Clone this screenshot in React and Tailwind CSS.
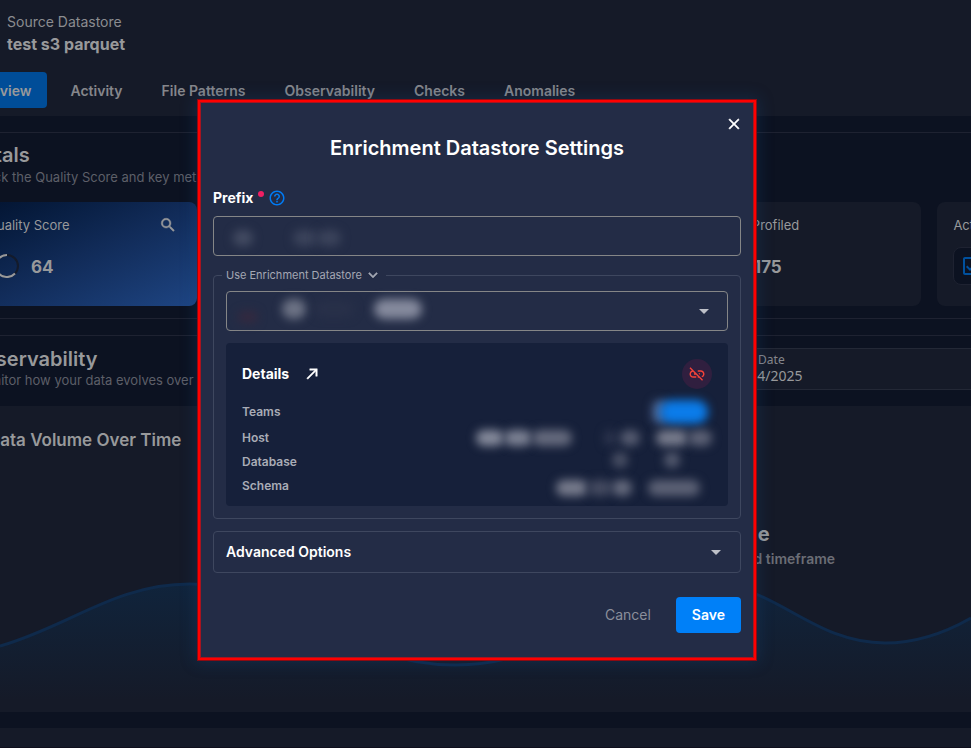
import React from "react";
import { MdArrowDropDown, MdHelpOutline, MdLinkOff, MdOutlineCheckBox } from "react-icons/md";

const tabs = ["Overview", "Activity", "File Patterns", "Observability", "Checks", "Anomalies"];

const glyphs = {
  close: "M19 6.41 17.59 5 12 10.59 6.41 5 5 6.41 10.59 12 5 17.59 6.41 19 12 13.41 17.59 19 19 17.59 13.41 12Z",
  search:
    "M9.5 3A6.5 6.5 0 0 1 16 9.5C16 11.11 15.41 12.59 14.44 13.73L14.71 14H15.5L20.5 19 19 20.5 14 15.5V14.71L13.73 14.44C12.59 15.41 11.11 16 9.5 16A6.5 6.5 0 0 1 9.5 3M9.5 5C7 5 5 7 5 9.5S7 14 9.5 14 14 12 14 9.5 12 5 9.5 5Z",
  chevron: "M7.41 8.58 12 13.17 16.59 8.58 18 10 12 16 6 10Z",
  arrow: "M5 17.59 15.59 7H9V5h10v10h-2V8.41L6.41 19Z",
};

function Glyph({ name, className }) {
  return (
    <svg aria-hidden="true" viewBox="0 0 24 24" fill="currentColor" stroke="currentColor" strokeWidth="0.6" className={className}>
      <path d={glyphs[name]} />
    </svg>
  );
}

function Header() {
  return (
    <header className="bg-[#151a28] pb-2 pt-3">
      <div className="pl-[7px]">
        <p className="text-sm leading-5 text-[#8b8c90]">Source Datastore</p>
        <h1 className="text-base font-bold leading-6 text-[#98999b]">test s3 parquet</h1>
      </div>
      <nav className="-ml-[49px] mt-4 flex gap-[7px]">
        {tabs.map((tab, i) => (
          <button
            key={tab}
            type="button"
            className={
              i === 0
                ? "h-9 shrink-0 rounded bg-[#004d98] px-4 pt-0.5 text-sm font-semibold text-[#98999b]"
                : "h-9 shrink-0 rounded px-4 pt-0.5 text-sm font-semibold text-[#85868b]"
            }
          >
            {tab}
          </button>
        ))}
      </nav>
    </header>
  );
}

function IconTile({ children }) {
  return (
    <div className="grid size-[38px] shrink-0 place-items-center rounded-lg border border-[#1e2231] bg-[#0c1221] text-[#00509d]">
      {children}
    </div>
  );
}

function Card({ label, value, icon }) {
  return (
    <article className="h-[104px] rounded-lg bg-[#151a28] px-4 pt-[11px]">
      <h3 className="text-[13px] leading-6 text-[#98999b]">{label}</h3>
      <div className="mt-[10px] flex items-center gap-1">
        <IconTile>{icon}</IconTile>
        <span className="pt-1 text-[17px] font-bold text-[#98999b]">{value}</span>
      </div>
    </article>
  );
}

function QualityCard() {
  return (
    <article className="h-[104px] rounded-lg bg-linear-to-br from-[#03132f] via-[#112b58] to-[#1e4583] px-4 pt-[11px]">
      <div className="flex items-center justify-between">
        <h3 className="text-[13px] leading-6 text-[#98999b]">Quality Score</h3>
        <Glyph name="search" className="mr-1 size-[18px] text-[#98999b]" />
      </div>
      <div className="mt-[10px] flex h-[38px] items-center gap-3">
        <svg className="ml-2 size-6" viewBox="0 0 24 24" fill="none" strokeWidth="2">
          <circle cx="12" cy="12" r="11" stroke="#141b2b" />
          <path d="M12 1 A11 11 0 1 0 20 19.5" stroke="#98999b" />
        </svg>
        <span className="pt-1 text-[17px] font-bold text-[#98999b]">64</span>
      </div>
    </article>
  );
}

function Totals() {
  return (
    <section className="mt-4 border-y border-[#1e2231] py-3">
      <h2 className="text-xl font-semibold leading-5 text-[#98999b]">Totals</h2>
      <p className="pl-[3px] pt-0.5 text-[13px] leading-5 text-[#5d5f68]">
        Track the Quality Score and key metrics
      </p>
      <div className="mt-[15px] grid w-[1192px] grid-cols-5 gap-4">
        <QualityCard />
        <Card label="Tables" />
        <Card label="Records" />
        <Card label="Fields Profiled" value="175" />
        <Card label="Active Checks" value="96" icon={<MdOutlineCheckBox className="size-6" />} />
      </div>
    </section>
  );
}

function ObservabilitySection() {
  return (
    <section className="mt-4 border-t border-[#1e2231]">
      <div className="flex h-[70px] items-start justify-between pt-3">
        <div className="w-[560px] shrink-0">
          <h2 className="-ml-[3px] text-xl font-semibold leading-[22px] text-[#98999b]">Observability</h2>
          <p className="pl-[3px] text-[13px] leading-5 text-[#5d5f68]">Monitor how your data evolves over time</p>
        </div>
        <div className="ml-16 flex h-[42px] flex-1 flex-col justify-center border border-r-0 border-[#232836] bg-[#151a28] pb-0.5 pl-[132px] font-['Noto_Sans',sans-serif]">
          <span className="text-xs leading-4 text-[#85868b]">Start Date</span>
          <span className="text-sm leading-4 text-[#98999b]">03/24/2025</span>
        </div>
      </div>
    </section>
  );
}

function VolumePanel() {
  return (
    <section className="relative h-[306px] bg-[#151a28] pt-5">
      <svg
        className="absolute bottom-0 left-0 h-[140px] w-full"
        viewBox="0 572 971 140"
        preserveAspectRatio="none"
        fill="none"
      >
        <defs>
          <linearGradient id="volume" x1="0" y1="583" x2="0" y2="700" gradientUnits="userSpaceOnUse">
            <stop offset="0" stopColor="#10243c" />
            <stop offset="1" stopColor="#151a28" />
          </linearGradient>
        </defs>
        <path
          d="M0 646 C70 626 115 584 190 584 C300 584 340 665 455 665 C570 665 610 582 700 582 C775 582 810 643 885 643 C920 643 950 630 971 618 V712 H0Z"
          fill="url(#volume)"
        />
        <path
          d="M0 646 C70 626 115 584 190 584 C300 584 340 665 455 665 C570 665 610 582 700 582 C775 582 810 643 885 643 C920 643 950 630 971 618"
          stroke="#0f2a4b"
          strokeWidth="3"
        />
      </svg>
      <h2 className="-ml-3 text-[17px] font-semibold leading-7 text-[#98999b]">Data Volume Over Time</h2>
      <div className="ml-[386px] mt-[66px] w-[600px] text-center">
        <p className="text-xl font-bold leading-7 text-[#98999b]">No data available</p>
        <p className="text-sm font-semibold leading-[22px] text-[#6b6d75]">
          No data available for the selected timeframe
        </p>
      </div>
    </section>
  );
}

/* Illegible stand-in for a value that is kept private. */
function Smudge({ className }) {
  return <span aria-hidden="true" className={"block shrink-0 rounded-full blur-[5px] " + className} />;
}

function DetailRow({ label, children }) {
  return (
    <div className="flex h-6 items-center justify-between">
      <dt className="text-xs font-semibold text-[#a9acb6]">{label}</dt>
      <dd className="flex items-center">{children}</dd>
    </div>
  );
}

function DetailsPanel() {
  return (
    <section className="mt-3 rounded bg-[#16203a] px-4 pb-2 pt-4">
      <div className="flex h-[30px] items-center">
        <h3 className="text-sm font-bold text-white">Details</h3>
        <a href="#datastore" aria-label="Open datastore" className="ml-[14px] text-white">
          <Glyph name="arrow" className="size-[18px]" />
        </a>
        <button
          type="button"
          aria-label="Unlink datastore"
          className="ml-auto grid size-[30px] place-items-center rounded-full bg-[#301f3f] text-[#f4433a]"
        >
          <MdLinkOff className="size-[18px]" />
        </button>
      </div>
      <dl className="mt-[11px]">
        <DetailRow label="Teams">
          <Smudge className="h-6 w-4 bg-[#4a6390]" />
          <Smudge className="-ml-2 mr-1 h-6 w-12 bg-[#0b7cea]" />
        </DetailRow>
        <div className="h-[2px]" />
        <DetailRow label="Host">
          <Smudge className="h-4 w-7 bg-[#858a9b]" />
          <Smudge className="h-4 w-7 bg-[#7c8193]" />
          <Smudge className="h-4 w-10 bg-[#656a7d]" />
          <Smudge className="ml-8 h-4 w-3 bg-[#2c344d]" />
          <Smudge className="ml-1 h-4 w-5 bg-[#555b70]" />
          <Smudge className="ml-4 h-4 w-8 bg-[#777b8c]" />
          <Smudge className="h-4 w-6 bg-[#5c6175]" />
        </DetailRow>
        <DetailRow label="Database">
          <Smudge className="mb-1 h-4 w-4 bg-[#4a5065]" />
          <Smudge className="mb-1 ml-9 mr-8 h-4 w-4 bg-[#555b70]" />
        </DetailRow>
        <DetailRow label="Schema">
          <Smudge className="mt-1 h-4 w-8 bg-[#777b8c]" />
          <Smudge className="mt-1 h-4 w-6 bg-[#444a60]" />
          <Smudge className="mt-1 h-4 w-5 bg-[#656a7d]" />
          <Smudge className="ml-4 mr-3 mt-1 h-4 w-13 bg-[#5c6175]" />
        </DetailRow>
      </dl>
    </section>
  );
}

function SettingsDialog() {
  return (
    <div className="absolute inset-0 flex items-center justify-center pr-[17px] pt-3">
      <form
        role="dialog"
        aria-labelledby="dialog-title"
        onSubmit={(e) => e.preventDefault()}
        className="relative w-full max-w-[558px] border-2 border-[#ff0000] bg-[#232c46] px-[13px] pb-[25px] pt-8 shadow-[0_0_0_1px_#8c0b12,inset_0_0_0_1px_#a51420,0_0_14px_3px_rgba(25,80,140,0.25)]"
      >
        <button type="button" aria-label="Close" className="absolute right-[11px] top-[13px] text-white">
          <Glyph name="close" className="size-[18px]" />
        </button>
        <h2 id="dialog-title" className="text-center text-xl font-semibold leading-7 text-white">
          Enrichment Datastore Settings
        </h2>

        <div className="mt-7 flex h-4 items-center">
          <label htmlFor="prefix" className="text-sm font-bold text-white">
            Prefix
          </label>
          <span className="mb-2 ml-[5px] size-[6px] rounded-full bg-[#f01f63]" />
          <MdHelpOutline className="ml-1 size-[18px] text-[#007bf5]" />
        </div>
        <div className="relative mt-[10px]">
          <input
            id="prefix"
            type="text"
            className="block h-10 w-full rounded border border-[#858687] px-4 text-sm text-white"
          />
          <div className="pointer-events-none absolute inset-0 flex items-center pl-5 pt-1">
            <Smudge className="h-4 w-5 bg-[#434b62]" />
            <Smudge className="ml-10 h-4 w-6 bg-[#3b435b]" />
            <Smudge className="h-4 w-6 bg-[#3b435b]" />
          </div>
        </div>

        <fieldset className="mt-[11px] rounded border border-[#3e475f] px-3 pb-3 pt-2">
          <legend className="-ml-1 px-1">
            <button type="button" className="flex h-4 items-center gap-0.5 text-[11px] text-[#a3a7b3]">
              Use Enrichment Datastore
              <Glyph name="chevron" className="size-[18px]" />
            </button>
          </legend>
          <div className="relative">
            <select
              aria-label="Enrichment datastore"
              className="block h-10 w-full appearance-none rounded border border-[#858687] px-4 text-sm text-white"
            />
            <div className="pointer-events-none absolute inset-0 flex items-center pl-3 pr-3">
              <Smudge className="mt-3 h-3 w-5 bg-[#34293f]" />
              <Smudge className="mb-1 ml-6 h-5 w-6 bg-[#6d7385]" />
              <Smudge className="mb-1 ml-2 h-4 w-10 bg-[#283049]" />
              <Smudge className="mb-1 ml-5 h-5 w-12 bg-[#858a9d]" />
              <MdArrowDropDown className="ml-auto size-6 text-[#bdc0c8]" />
            </div>
          </div>
          <DetailsPanel />
        </fieldset>

        <button
          type="button"
          className="mt-3 flex h-[42px] w-full items-center justify-between rounded border border-[#3e475f] px-3 text-sm font-semibold text-white"
        >
          Advanced Options
          <MdArrowDropDown className="size-6 text-[#bdc0c8]" />
        </button>

        <div className="mt-6 flex justify-end gap-[9px]">
          <button type="button" className="h-9 px-4 text-sm text-[#8b8f9b]">
            Cancel
          </button>
          <button type="submit" className="h-9 rounded bg-[#0080f8] px-4 text-sm font-semibold text-white">
            Save
          </button>
        </div>
      </form>
    </div>
  );
}

export default function App() {
  return (
    <div className="relative h-screen min-h-[740px] overflow-hidden bg-[#0c1221] font-[Inter,sans-serif]">
      <Header />
      <main>
        <div className="-ml-[29px]">
          <Totals />
          <ObservabilitySection />
        </div>
        <VolumePanel />
        <section className="mt-4 h-5 border-b border-[#0f0f1d] bg-[#151a28]" />
      </main>
      <SettingsDialog />
    </div>
  );
}
